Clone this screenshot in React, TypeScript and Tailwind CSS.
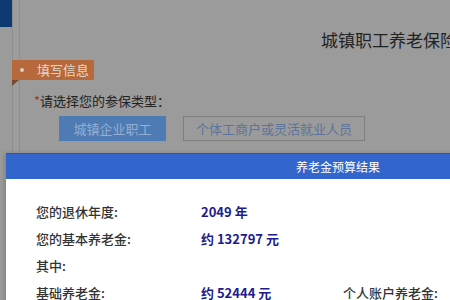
import React from 'react';

interface ResultRow {
  label: string;
  value?: string;
  extraLabel?: string;
}

const rows: ResultRow[] = [
  { label: '您的退休年度:', value: '2049 年' },
  { label: '您的基本养老金:', value: '约 132797 元' },
  { label: '其中:' },
  { label: '基础养老金:', value: '约 52444 元', extraLabel: '个人账户养老金:' },
];

const App = () => {
  return (
    <div
      className="relative w-[450px] h-[300px] overflow-hidden bg-[#9b9b9b]"
      style={{ fontFamily: '"Noto Sans CJK SC", "Noto Sans", sans-serif' }}
    >
      <div className="flex h-full">
        {/* barra lateral */}
        <div className="w-[12px] shrink-0">
          <div className="h-[27px] bg-[#0d3a70]" />
        </div>
        <div className="w-[8px] shrink-0 border-l border-r border-[#8e8e8e] bg-[#9d9d9d]" />

        {/* contenido */}
        <div className="flex-1 min-w-0">
          <div className="pt-[30px] pl-[301px] text-[17px] leading-[20px] text-[#222] whitespace-nowrap">
            城镇职工养老保险计算器
          </div>

          <div className="mt-[10px] -ml-[8px]">
            <div className="flex items-center w-[82px] h-[20px] bg-[#b8693b]">
              <span className="ml-[8px] w-[4px] h-[4px] rounded-full bg-[#ddd0c4]" />
              <span className="ml-[13px] text-[13px] leading-[20px] text-[#e6d8cc]">填写信息</span>
            </div>
            <div className="w-0 h-0 border-t-[6px] border-t-[#7b4a2e] border-r-[7px] border-r-transparent" />
          </div>

          <div className="mt-[6px] pl-[14px] text-[13px] leading-[18px] text-[#222]">
            <span className="text-[#a33434]">*</span>请选择您的参保类型：
          </div>

          <div className="flex mt-[6px] pl-[39px] gap-[17px]">
            <div className="w-[107px] h-[25px] flex items-center justify-center bg-[#4f7bb4] text-[13px] text-[#95afd2]">
              城镇企业职工
            </div>
            <div className="w-[182px] h-[25px] flex items-center justify-center border border-[#7e7e7e] text-[13px] text-[#5d7399]">
              个体工商户或灵活就业人员
            </div>
          </div>
        </div>
      </div>

      {/* ventana de resultado */}
      <div className="absolute left-[6px] top-[153px] w-[664px] h-[200px] bg-white shadow-[-2px_0_4px_rgba(0,0,0,0.15)]">
        <div className="h-[26px] bg-[#3366cc] border-t border-[#2a55aa] flex items-center justify-center text-[12px] text-white">
          养老金预算结果
        </div>
        <div className="pt-[19px] pl-[30px]">
          {rows.map(row => (
            <div key={row.label} className="flex h-[27px] items-center text-[13px] whitespace-nowrap">
              <div className="w-[165px] font-medium text-[#333]">{row.label}</div>
              {row.value && <div className="w-[142px] font-bold text-[#1c1c8c]">{row.value}</div>}
              {row.extraLabel && <div className="font-medium text-[#333]">{row.extraLabel}</div>}
            </div>
          ))}
        </div>
      </div>
    </div>
  );
};

export default App;
